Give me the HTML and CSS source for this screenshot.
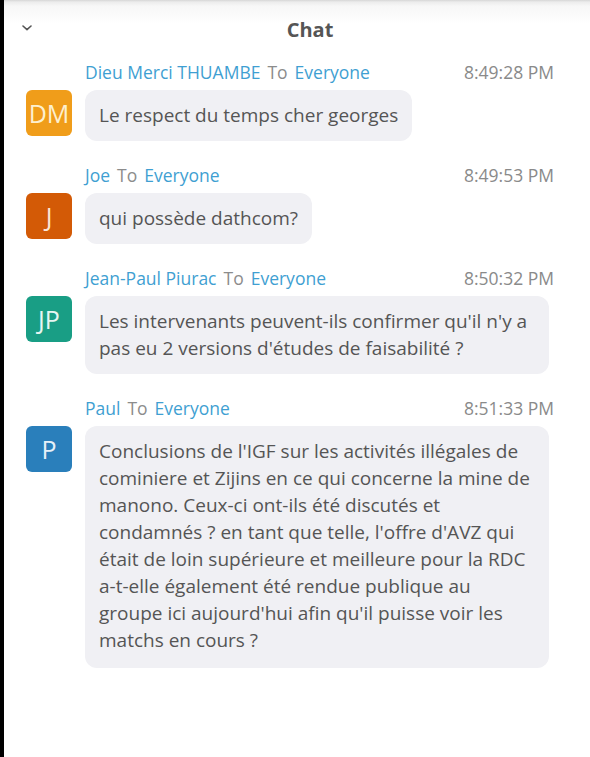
FILE: index.html
```html
<!DOCTYPE html>
<html>
<head>
<meta charset="utf-8">
<link rel="stylesheet" href="styles.css">
</head>
<body>
<div class="panel">
  <header class="topbar">
    <svg class="chevron" width="10" height="6" viewBox="0 0 10 6"><path d="M1 1 L5 4.6 L9 1" fill="none" stroke="#555" stroke-width="1.6" stroke-linecap="round" stroke-linejoin="round"/></svg>
    <div class="title">Chat</div>
  </header>
  <main class="messages">
    <div class="msg">
      <div class="meta"><span class="name">Dieu Merci THUAMBE</span><span class="to">To</span><span class="name">Everyone</span><span class="time">8:49:28 PM</span></div>
      <div class="avatar a-orange">DM</div>
      <div class="bubble">Le respect du temps cher georges</div>
    </div>
    <div class="msg">
      <div class="meta"><span class="name">Joe</span><span class="to">To</span><span class="name">Everyone</span><span class="time">8:49:53 PM</span></div>
      <div class="avatar a-rust">J</div>
      <div class="bubble">qui possède dathcom?</div>
    </div>
    <div class="msg">
      <div class="meta"><span class="name">Jean-Paul Piurac</span><span class="to">To</span><span class="name">Everyone</span><span class="time">8:50:32 PM</span></div>
      <div class="avatar a-teal">JP</div>
      <div class="bubble">Les intervenants peuvent-ils confirmer qu'il n'y a pas eu 2 versions d'études de faisabilité ?</div>
    </div>
    <div class="msg">
      <div class="meta"><span class="name">Paul</span><span class="to">To</span><span class="name">Everyone</span><span class="time">8:51:33 PM</span></div>
      <div class="avatar a-blue">P</div>
      <div class="bubble bubble-long">Conclusions de l'IGF sur les activités illégales de cominiere et Zijins en ce qui concerne la mine de manono. Ceux-ci ont-ils été discutés et condamnés ? en tant que telle, l'offre d'AVZ qui était de loin supérieure et meilleure pour la RDC a-t-elle également été rendue publique au groupe ici aujourd'hui afin qu'il puisse voir les matchs en cours ?</div>
    </div>
  </main>
</div>
</body>
</html>
```
FILE: styles.css
```css
html, body {
  margin: 0;
  padding: 0;
  background: #fff;
}
body {
  font-family: "Open Sans", "Noto Sans", sans-serif;
  width: 590px;
  height: 757px;
  overflow: hidden;
}
.panel {
  border-left: 4px solid #000;
  height: 757px;
  box-sizing: border-box;
  background: #fff;
}
.topbar {
  height: 60px;
  display: flex;
  align-items: center;
  background: linear-gradient(#d6d6d6 0, #ececec 2px, #f7f7f7 6px, #fff 24px);
  padding-bottom: 2px;
  box-sizing: border-box;
}
.chevron {
  margin-left: 18px;
  margin-top: -2px;
  flex: none;
}
.title {
  flex: 1;
  text-align: center;
  font-size: 20px;
  font-weight: 700;
  color: #555;
  padding-right: 2px;
}
.messages {
  display: flex;
  flex-direction: column;
  gap: 22px;
  padding-left: 22px;
}
.msg {
  display: grid;
  grid-template-columns: 46px 464px;
  column-gap: 13px;
  row-gap: 6px;
}
.meta {
  grid-column: 2;
  display: flex;
  align-items: center;
  height: 24px;
  font-size: 17.5px;
  margin-right: -5px;
}
.name {
  color: #3f9fd2;
}
.to {
  color: #8c8c8c;
  margin: 0 7px;
}
.time {
  margin-left: auto;
  color: #8a8a8a;
}
.avatar {
  grid-column: 1;
  width: 46px;
  height: 46px;
  border-radius: 6px;
  display: flex;
  align-items: center;
  justify-content: center;
  font-size: 25px;
}
.a-orange { background: #f09d1a; color: #fdf0cf; }
.a-rust { background: #d35a06; color: #fbe6d6; }
.a-teal { background: #199e85; color: #e6f6f2; }
.a-blue { background: #2a7fbb; color: #e6f0f8; }
.bubble {
  grid-column: 2;
  justify-self: start;
  background: #f0f0f4;
  border-radius: 12px;
  padding: 12px 14px;
  font-size: 19px;
  line-height: 27px;
  color: #555;
}
.bubble-long {
  padding-bottom: 14px;
}
```
